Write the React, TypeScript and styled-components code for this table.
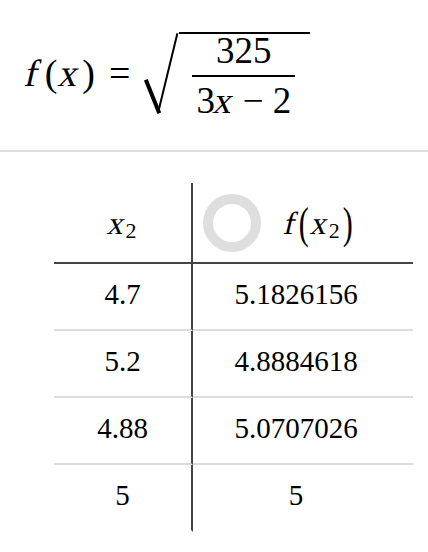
import React from "react";
import styled, { createGlobalStyle } from "styled-components";

const Global = createGlobalStyle`
  html, body { margin: 0; padding: 0; background: #fff; color: #000; }
  body { font-family: "Liberation Serif", serif; }
`;

const Page = styled.div`
  width: 428px;
  height: 552px;
  display: flex;
  flex-direction: column;
  font-family: "Liberation Serif", serif;
`;

const FormulaPanel = styled.div`
  height: 152px;
  box-sizing: border-box;
  border-bottom: 2px solid #dcdcdc;
  display: flex;
  align-items: flex-start;
  padding: 32px 0 0 26px;
  flex-shrink: 0;
`;

const MathRow = styled.div`
  display: flex;
  align-items: center;
  font-size: 38px;
  line-height: 1;
  height: 81px;
`;

const Sym = styled.span<{ $italic?: boolean; $ml?: number; $mr?: number }>`
  display: inline-block;
  transform: ${(p) => (p.$italic ? "skewX(-13deg)" : "none")};
  margin-left: ${(p) => p.$ml ?? 0}px;
  margin-right: ${(p) => p.$mr ?? 0}px;
`;

const Radical = styled.div`
  display: flex;
  align-items: stretch;
  height: 81px;
  margin-left: 13px;
`;

const RadicalSign = styled.div`
  position: relative;
  width: 36px;
  height: 81px;
  flex-shrink: 0;
  &::before {
    content: "";
    position: absolute;
    left: 3px;
    top: 46px;
    width: 36px;
    height: 3.6px;
    background: #000;
    transform-origin: 0 50%;
    transform: rotate(68deg);
  }
  &::after {
    content: "";
    position: absolute;
    left: 15px;
    top: 80px;
    width: 82px;
    height: 2px;
    background: #000;
    transform-origin: 0 50%;
    transform: rotate(-76.3deg);
  }
`;

const Radicand = styled.div`
  border-top: 2px solid #000;
  padding: 0 15px 0 13px;
  display: flex;
  align-items: center;
`;

const Fraction = styled.div`
  display: inline-flex;
  flex-direction: column;
  align-items: center;
  margin-top: 4px;
`;

const Numerator = styled.div`
  padding: 0 0 6px;
  font-size: 37px;
  line-height: 1;
`;

const Bar = styled.div`
  align-self: stretch;
  height: 2px;
  background: #000;
`;

const Denominator = styled.div`
  padding: 5px 4px 0;
  font-size: 37px;
  line-height: 1;
  white-space: nowrap;
`;

const TableArea = styled.div`
  padding: 31px 0 0 54px;
`;

const Grid = styled.div`
  display: grid;
  grid-template-columns: 139px 220px;
`;

const Cell = styled.div<{ $left?: boolean; $header?: boolean; $last?: boolean }>`
  box-sizing: border-box;
  height: ${(p) => (p.$header ? 81 : 67)}px;
  display: flex;
  align-items: center;
  justify-content: center;
  padding-right: ${(p) => (p.$left ? 0 : 14)}px;
  border-right: ${(p) => (p.$left ? "2px solid #444" : "none")};
  border-bottom: ${(p) =>
    p.$header ? "2px solid #444" : p.$last ? "2px solid transparent" : "2px solid #dcdcdc"};
  font-size: 29px;
  line-height: 1;
`;

const Value = styled.span`
  position: relative;
  top: -2px;
`;

const HeaderMath = styled.span`
  display: inline-flex;
  align-items: center;
  font-size: 32px;
  line-height: 1;
`;

const Ital = styled.span`
  display: inline-block;
  transform: skewX(-13deg);
`;

const Sub = styled.span`
  font-size: 22px;
  position: relative;
  top: 8px;
  margin-left: 1px;
`;

const TallParen = styled.span`
  display: inline-block;
  font-size: 30px;
  transform: scaleY(1.45);
  margin: 0 3px;
`;

const HeaderRight = styled.div`
  display: flex;
  align-items: center;
  width: 100%;
  padding-left: 10px;
  gap: 24px;
`;

const ColorRing = styled.div`
  width: 58px;
  height: 58px;
  border-radius: 50%;
  box-sizing: border-box;
  border: 10px solid #dedede;
  background: #fff;
  flex-shrink: 0;
`;

const rows = [
  ["4.7", "5.1826156"],
  ["5.2", "4.8884618"],
  ["4.88", "5.0707026"],
  ["5", "5"],
];

export default function App() {
  return (
    <Page>
      <Global />
      <FormulaPanel>
        <MathRow>
          <Sym $italic $mr={6}>f</Sym>
          <Sym>(</Sym>
          <Sym $italic $ml={3} $mr={3}>x</Sym>
          <Sym>)</Sym>
          <Sym $ml={14}>=</Sym>
          <Radical>
            <RadicalSign />
            <Radicand>
              <Fraction>
                <Numerator>325</Numerator>
                <Bar />
                <Denominator>
                  3<Ital>x</Ital> − 2
                </Denominator>
              </Fraction>
            </Radicand>
          </Radical>
        </MathRow>
      </FormulaPanel>
      <TableArea>
        <Grid>
          <Cell $left $header>
            <HeaderMath>
              <Ital>x</Ital>
              <Sub>2</Sub>
            </HeaderMath>
          </Cell>
          <Cell $header>
            <HeaderRight>
              <ColorRing />
              <HeaderMath>
                <Ital>f</Ital>
                <TallParen>(</TallParen>
                <Ital>x</Ital>
                <Sub>2</Sub>
                <TallParen>)</TallParen>
              </HeaderMath>
            </HeaderRight>
          </Cell>
          {rows.map(([a, b], i) => (
            <React.Fragment key={i}>
              <Cell $left $last={i === rows.length - 1}>
                <Value>{a}</Value>
              </Cell>
              <Cell $last={i === rows.length - 1}>
                <Value>{b}</Value>
              </Cell>
            </React.Fragment>
          ))}
        </Grid>
      </TableArea>
    </Page>
  );
}
